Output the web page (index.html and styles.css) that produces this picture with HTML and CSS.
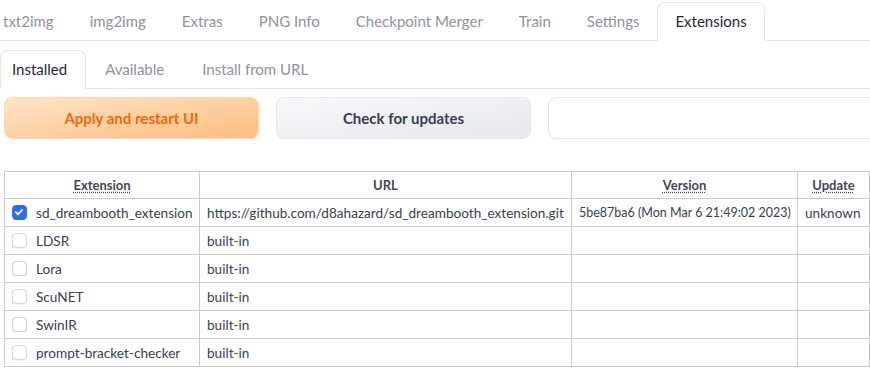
FILE: index.html
```html
<!DOCTYPE html>
<html lang="en">
  <head>
    <meta charset="UTF-8" />
    <meta name="viewport" content="width=device-width, initial-scale=1.0" />
    <title>Extensions</title>
    <link rel="stylesheet" href="styles.css">
  </head>
  <body>
    <div class="tabs">
      <div class="tab">txt2img</div>
      <div class="tab">img2img</div>
      <div class="tab">Extras</div>
      <div class="tab">PNG Info</div>
      <div class="tab">Checkpoint Merger</div>
      <div class="tab">Train</div>
      <div class="tab">Settings</div>
      <div class="tab active">Extensions</div>
    </div>

    <div class="subtabs">
      <div class="tab active">Installed</div>
      <div class="tab">Available</div>
      <div class="tab">Install from URL</div>
    </div>

    <div class="content">
      <div class="actions">
        <button class="btn primary">Apply and restart UI</button>
        <button class="btn secondary">Check for updates</button>
        <div class="textbox"></div>
      </div>

      <table class="ext-table">
        <thead>
          <tr>
            <th class="col-name"><abbr>Extension</abbr></th>
            <th class="col-url">URL</th>
            <th class="col-version"><abbr>Version</abbr></th>
            <th class="col-update"><abbr>Update</abbr></th>
          </tr>
        </thead>
        <tbody>
          <tr>
            <td><label class="ext"><span class="check checked"><svg viewBox="0 0 14 14" width="14" height="14"><path d="M3.8 7.2 L6 9.3 L10.2 4.9" fill="none" stroke="#fff" stroke-width="1.8" stroke-linecap="round" stroke-linejoin="round"/></svg></span>sd_dreambooth_extension</label></td>
            <td>https://github.com/d8ahazard/sd_dreambooth_extension.git</td>
            <td class="version">5be87ba6 (Mon Mar 6 21:49:02 2023)</td>
            <td>unknown</td>
          </tr>
          <tr>
            <td><label class="ext"><span class="check"></span>LDSR</label></td>
            <td>built-in</td>
            <td></td>
            <td></td>
          </tr>
          <tr>
            <td><label class="ext"><span class="check"></span>Lora</label></td>
            <td>built-in</td>
            <td></td>
            <td></td>
          </tr>
          <tr>
            <td><label class="ext"><span class="check"></span>ScuNET</label></td>
            <td>built-in</td>
            <td></td>
            <td></td>
          </tr>
          <tr>
            <td><label class="ext"><span class="check"></span>SwinIR</label></td>
            <td>built-in</td>
            <td></td>
            <td></td>
          </tr>
          <tr>
            <td><label class="ext"><span class="check"></span>prompt-bracket-checker</label></td>
            <td>built-in</td>
            <td></td>
            <td></td>
          </tr>
        </tbody>
      </table>
    </div>
  </body>
</html>
```

FILE: styles.css
```css
* {
  box-sizing: border-box;
}

body {
  margin: 0;
  font-family: Lato, "Open Sans", sans-serif;
  background-color: #fff;
  color: #374151;
  overflow: hidden;
}

/* Top tab strip */
.tabs {
  display: flex;
  padding-top: 2px;
  margin-left: -15px;
  border-bottom: 1px solid #e5e7eb;
}

.tab {
  height: 39px;
  line-height: 36px;
  padding: 0 17px;
  margin-bottom: -1px;
  font-size: 15px;
  color: #8e939c;
  border: 1px solid transparent;
  border-bottom: none;
  border-radius: 8px 8px 0 0;
  white-space: nowrap;
}

.tab.active {
  color: #1f2937;
  background-color: #fff;
  border-color: #e5e7eb;
}

/* Sub tabs */
.subtabs {
  display: flex;
  margin-top: 9px;
  border-bottom: 1px solid #e5e7eb;
}

.subtabs .tab {
  height: 39px;
  line-height: 37px;
  padding: 0 18px 0 11px;
  margin-right: 7px;
}

.subtabs .tab.active {
  padding-right: 18px;
}

.content {
  padding: 0 0 0 4px;
}

/* Buttons row */
.actions {
  display: flex;
  gap: 17px;
  margin-top: 8px;
  margin-right: -30px;
}

.btn {
  width: 255px;
  height: 42px;
  border-radius: 8px;
  font-family: inherit;
  font-size: 15px;
  font-weight: 700;
  cursor: pointer;
}

.btn.primary {
  color: #ea6a0c;
  background: linear-gradient(to bottom right, #ffe4c7, #fdbd80);
  border: 1px solid #fcd9b6;
}

.btn.secondary {
  color: #374151;
  background: linear-gradient(to bottom right, #f7f8fa, #e7e8eb);
  border: 1px solid #e5e7eb;
}

.textbox {
  flex: 1;
  height: 42px;
  border: 1px solid #e5e7eb;
  border-radius: 8px;
  background-color: #fff;
}

/* Extensions table */
.ext-table {
  width: 866px;
  margin-top: 32px;
  border-collapse: collapse;
  table-layout: fixed;
  font-size: 13.6px;
}

.ext-table th,
.ext-table td {
  border: 1px solid #cccccc;
  padding: 0 7px;
  white-space: nowrap;
}

.ext-table th {
  height: 27px;
  font-size: 13px;
  font-weight: 700;
  text-align: center;
  color: #3f4754;
}

.ext-table td {
  height: 28px;
  text-align: left;
  color: #374151;
}

.ext-table td.version {
  font-size: 12.5px;
}

.ext-table abbr {
  text-decoration: underline dotted;
  text-underline-offset: 2px;
}

.col-name {
  width: 195px;
}

.col-url {
  width: 372px;
}

.col-version {
  width: 226px;
}

.ext {
  display: flex;
  align-items: center;
  gap: 9px;
}

.check {
  display: inline-block;
  width: 15px;
  height: 15px;
  border: 1px solid #d1d5db;
  border-radius: 4px;
  background-color: #fff;
  box-shadow: 0 1px 1px rgba(0, 0, 0, 0.05);
}

.check.checked {
  background-color: #2f6ee6;
  border-color: #2f6ee6;
}

.check svg {
  display: block;
  margin: -1px 0 0 -1px;
}
```
